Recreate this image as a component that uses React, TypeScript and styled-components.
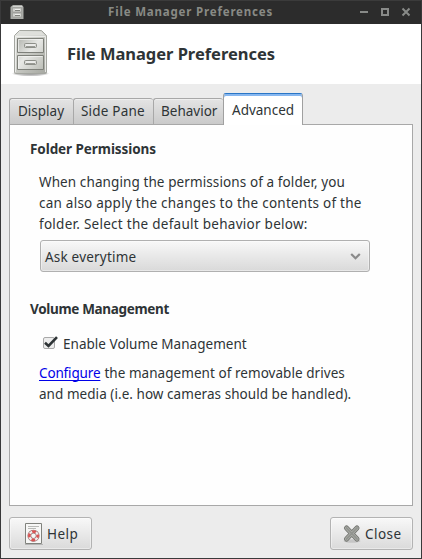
import React from 'react';
import styled, { createGlobalStyle } from 'styled-components';

const GlobalStyle = createGlobalStyle`
  * { box-sizing: border-box; }
  html, body, #root { margin: 0; height: 100%; }
  body {
    font: 13.5px/21px "Noto Sans", "Open Sans", sans-serif;
    color: #2e3436;
    background: #ececec;
    overflow: hidden;
  }
`;

const Window = styled.div`
  display: flex;
  flex-direction: column;
  width: 422px;
  height: 559px;
  border: 1px solid #39393a;
  border-top: 0;
  background: #ececec;
`;

const TitleBar = styled.header`
  display: grid;
  grid-template-columns: 107px 1fr auto;
  align-items: center;
  height: 24px;
  padding: 0 10px 2px 9px;
  border-top: 1px solid #3b3b3b;
  background: #2c2c2c;
`;

const WindowTitle = styled.div`
  margin: 0 0 0 -9px;
  color: #888a85;
  font-size: 11.5px;
  font-weight: 700;
  line-height: 20px;
  letter-spacing: 0.82px;
  white-space: nowrap;
`;

const WindowControls = styled.div`
  display: flex;
`;

const Banner = styled.div`
  display: flex;
  align-items: center;
  height: 60px;
  padding-left: 10px;
  background: #fff;
`;

const Heading = styled.h1`
  margin: 0 0 0 16px;
  font-size: 16.5px;
  font-weight: 700;
  line-height: 24px;
  letter-spacing: -0.03px;
  white-space: nowrap;
`;

const Notebook = styled.main`
  display: flex;
  flex-direction: column;
  height: 413px;
  margin: 9px 8px 0;
`;

const TabList = styled.div`
  display: flex;
  align-items: flex-end;
  height: 31px;
  z-index: 1;
`;

const Tab = styled.button<{ $width: number; $spacing?: number }>`
  width: ${p => p.$width}px;
  height: 27px;
  margin: 0;
  padding: 0 0 0 7px;
  border: 1px solid #a8a8a8;
  border-width: 1px 0 1px 1px;
  border-radius: 3px 3px 0 0;
  background: linear-gradient(#e4e4e4, #cacaca);
  box-shadow: inset 0 1px #efefef;
  color: inherit;
  font: inherit;
  letter-spacing: ${p => p.$spacing ?? 0}px;
  text-align: left;
  white-space: nowrap;
  margin-bottom: -1px;

  &:first-child { padding-left: 8px; }
`;

const ActiveTab = styled(Tab)`
  height: 32px;
  padding: 2px 0 0 8px;
  border-color: #2a76c6 #a0a0a0 #a0a0a0;
  border-width: 1px 1px 0;
  background: #fff;
  box-shadow: inset 0 2px #86b7f0;
`;

const Page = styled.section`
  flex: 1;
  padding: 14px 20px;
  border: 1px solid #a8a8a8;
  background: #fefefe;
`;

const SectionTitle = styled.h2<{ $spacing?: number }>`
  margin: 0;
  font-size: 13.5px;
  font-weight: 700;
  line-height: 21px;
  letter-spacing: ${p => p.$spacing ?? 0}px;
`;

const Paragraph = styled.div<{ $top: number }>`
  margin: ${p => p.$top}px 0 0 9px;
`;

const Line = styled.div<{ $spacing?: number }>`
  letter-spacing: ${p => p.$spacing ?? 0}px;
  white-space: nowrap;
`;

const Select = styled.button`
  display: flex;
  align-items: center;
  justify-content: space-between;
  width: 330px;
  height: 32px;
  margin: 5px 0 27px 10px;
  padding: 2px 8px 0 4px;
  border: 1px solid #b0b0b0;
  border-radius: 3px;
  background: linear-gradient(#f8f8f8, #d9d9d9);
  box-shadow: inset 0 0 0 1px rgba(255, 255, 255, 0.4);
  color: inherit;
  font: inherit;
  letter-spacing: 0.2px;

  svg { margin-bottom: 2px; }
`;

const CheckRow = styled.label`
  display: flex;
  align-items: center;
  height: 21px;
  margin: 14px 0 0 12px;
  letter-spacing: 0.03px;

  svg { margin-bottom: 3px; }
`;

const CheckLabel = styled.span`
  margin-left: 5px;
`;

const Link = styled.a`
  margin-right: 4px;
  color: #0000e8;
  letter-spacing: -0.15px;
  text-decoration: underline;
  text-decoration-thickness: 1px;
  text-decoration-skip-ink: none;
  text-underline-offset: 2px;
`;

const Actions = styled.footer`
  display: flex;
  justify-content: space-between;
  margin: 11px 8px 0;
`;

const ActionButton = styled.button<{ $inset: number; $gap: number }>`
  display: flex;
  align-items: center;
  gap: ${p => p.$gap}px;
  width: 83px;
  height: 33px;
  padding: 1px 0 0 ${p => p.$inset}px;
  border: 1px solid #b3b3b3;
  border-radius: 3px;
  background: linear-gradient(#f8f8f8, #dadada);
  box-shadow: inset 0 0 0 1px rgba(255, 255, 255, 0.4);
  color: inherit;
  font: inherit;
  letter-spacing: 0.45px;
`;

function Cabinet() {
  return (
    <svg width="40" height="50" viewBox="0 0 40 50">
      <defs>
        <linearGradient id="caseFill" x1="0" y1="0" x2="1" y2="1">
          <stop offset="0" stopColor="#e8e9e5" />
          <stop offset="1" stopColor="#a5a7a0" />
        </linearGradient>
        <linearGradient id="drawerFill" x1="0" y1="0" x2="1" y2="1">
          <stop offset="0" stopColor="#b2b4ae" />
          <stop offset=".45" stopColor="#e7e8e5" />
          <stop offset="1" stopColor="#bbbdb6" />
        </linearGradient>
        <radialGradient id="floorShadow">
          <stop offset="0" stopColor="#000" stopOpacity=".45" />
          <stop offset=".75" stopColor="#000" stopOpacity=".2" />
          <stop offset="1" stopColor="#000" stopOpacity="0" />
        </radialGradient>
      </defs>
      <ellipse cx="19.5" cy="44.5" rx="19" ry="3" fill="url(#floorShadow)" />
      <path d="M3.5 6.5 8.5 1.5h22l5 5v37q0 1-1 1h-30q-1 0-1-1z" fill="url(#caseFill)" stroke="#a4a6a0" />
      <path d="M4.5 6.500 9 2.500h21L34.500 6.500z" fill="#dedfdb" />
      <path d="M4.500 43V7.500h30V43" fill="none" stroke="#f3f3f1" strokeOpacity=".8" />
      <g fill="url(#drawerFill)" stroke="#7e807a">
        <path d="M6.500 9.500h26v14h-26zM6.500 26.500h26v14h-26z" />
      </g>
      <g fill="none" stroke="#f5f5f3" strokeOpacity=".7">
        <path d="M7.500 22.500v-12h24M7.500 39.500v-12h24" />
      </g>
      <g fill="#d8d9d5" stroke="#8d8f89">
        <rect x="13.500" y="14.500" width="12" height="4" rx="1" />
        <rect x="13.500" y="31.500" width="12" height="4" rx="1" />
      </g>
      <path d="M15 16h9M15 33h9" stroke="#fff" />
      <path d="M15 17.500h9M15 34.500h9" stroke="#999b95" />
    </svg>
  );
}

function SmallCabinet() {
  return (
    <svg width="16" height="16" viewBox="0 0 16 16">
      <path d="M3 1h9l1.500 2v12h-13V3z" fill="#a9aba7" />
      <path d="M3 2h9l.5 1h-10z" fill="#d1d2cf" />
      <path d="M2.500 4h9v4h-9zM2.500 9h9v4h-9z" fill="#d0d1cd" stroke="#989a95" strokeWidth=".7" />
      <path d="M5 6.500h5M5 11.500h5" stroke="#7f817c" />
      <path d="M5 5.500h5M5 10.500h5" stroke="#efefed" />
    </svg>
  );
}

function Controls() {
  return (
    <svg width="52" height="10" viewBox="0 0 52 10" fill="none" stroke="#888a88" strokeWidth="2">
      <path d="M1 5h8" />
      <path d="M23 2h6v6h-6z" />
      <path d="m43.500 1.500 7 7m0-7-7 7" />
    </svg>
  );
}

function Chevron() {
  return (
    <svg width="11" height="9" viewBox="0 0 11 9" fill="none" stroke="#8a8a8a" strokeWidth="2.200">
      <path d="m1.200 2 4.300 4.200L9.800 2" />
    </svg>
  );
}

function CheckMark() {
  return (
    <svg width="16" height="14" viewBox="0 0 16 14">
      <rect x="1.500" y="1.500" width="11" height="11" rx="1.500" fill="#ededed" stroke="#a9a9a9" />
      <path d="m3 6.800 3.500 3.200L15 1.200" fill="none" stroke="#2e3436" strokeWidth="2.600" />
    </svg>
  );
}

function HelpIcon() {
  return (
    <svg width="20" height="24" viewBox="0 0 20 24">
      <path d="M1 22.500h18" stroke="#999" strokeOpacity=".6" />
      <path d="M1.500 1.500h16v20h-16z" fill="#f7f7f6" stroke="#80827d" />
      <path d="M4 4.500h11M4 6.500h8" stroke="#b9bab7" />
      <circle cx="9.500" cy="13.800" r="4.200" fill="none" stroke="#9a7777" strokeWidth="3.800" />
      <circle cx="9.500" cy="13.800" r="4.200" fill="none" stroke="#f2eeee" strokeWidth="2.400" />
      <circle cx="9.500" cy="13.800" r="4.200" fill="none" stroke="#d95454" strokeWidth="2.600" strokeDasharray="3.800 2.797" strokeDashoffset="1.900" />
    </svg>
  );
}

function CloseIcon() {
  return (
    <svg width="20" height="20" viewBox="0 0 20 20" strokeLinecap="round">
      <ellipse cx="10" cy="17" rx="8.500" ry="1.800" fill="#000" opacity=".12" />
      <path d="m4.500 4 10.500 11m0-11L4.500 15" stroke="#6f716c" strokeWidth="5" />
      <path d="m4.500 4 10.500 11m0-11L4.500 15" stroke="#a9aba6" strokeWidth="3.400" />
      <path d="m4.500 4 10.500 11m0-11L4.500 15" stroke="#92948f" strokeWidth="1.800" />
    </svg>
  );
}

export default function App() {
  return (
    <>
      <GlobalStyle />
      <Window>
        <TitleBar>
          <SmallCabinet />
          <WindowTitle>File Manager Preferences</WindowTitle>
          <WindowControls><Controls /></WindowControls>
        </TitleBar>
        <Banner>
          <Cabinet />
          <Heading>File Manager Preferences</Heading>
        </Banner>
        <Notebook>
          <TabList>
            <Tab $width={64}>Display</Tab>
            <Tab $width={80} $spacing={0.2}>Side Pane</Tab>
            <Tab $width={70}>Behavior</Tab>
            <ActiveTab $width={80}>Advanced</ActiveTab>
          </TabList>
          <Page>
            <SectionTitle $spacing={-0.07}>Folder Permissions</SectionTitle>
            <Paragraph $top={12}>
              <Line $spacing={0.1}>When changing the permissions of a folder, you</Line>
              <Line $spacing={0.24}>can also apply the changes to the contents of the</Line>
              <Line $spacing={0.27}>folder. Select the default behavior below:</Line>
            </Paragraph>
            <Select>Ask everytime<Chevron /></Select>
            <SectionTitle $spacing={-0.33}>Volume Management</SectionTitle>
            <CheckRow>
              <CheckMark />
              <CheckLabel>Enable Volume Management</CheckLabel>
            </CheckRow>
            <Paragraph $top={8}>
              <Line $spacing={0.05}><Link>Configure</Link>the management of removable drives</Line>
              <Line $spacing={0.05}>and media (i.e. how cameras should be handled).</Line>
            </Paragraph>
          </Page>
        </Notebook>
        <Actions>
          <ActionButton $inset={14} $gap={3}><HelpIcon />Help</ActionButton>
          <ActionButton $inset={11} $gap={3}><CloseIcon />Close</ActionButton>
        </Actions>
      </Window>
    </>
  );
}
